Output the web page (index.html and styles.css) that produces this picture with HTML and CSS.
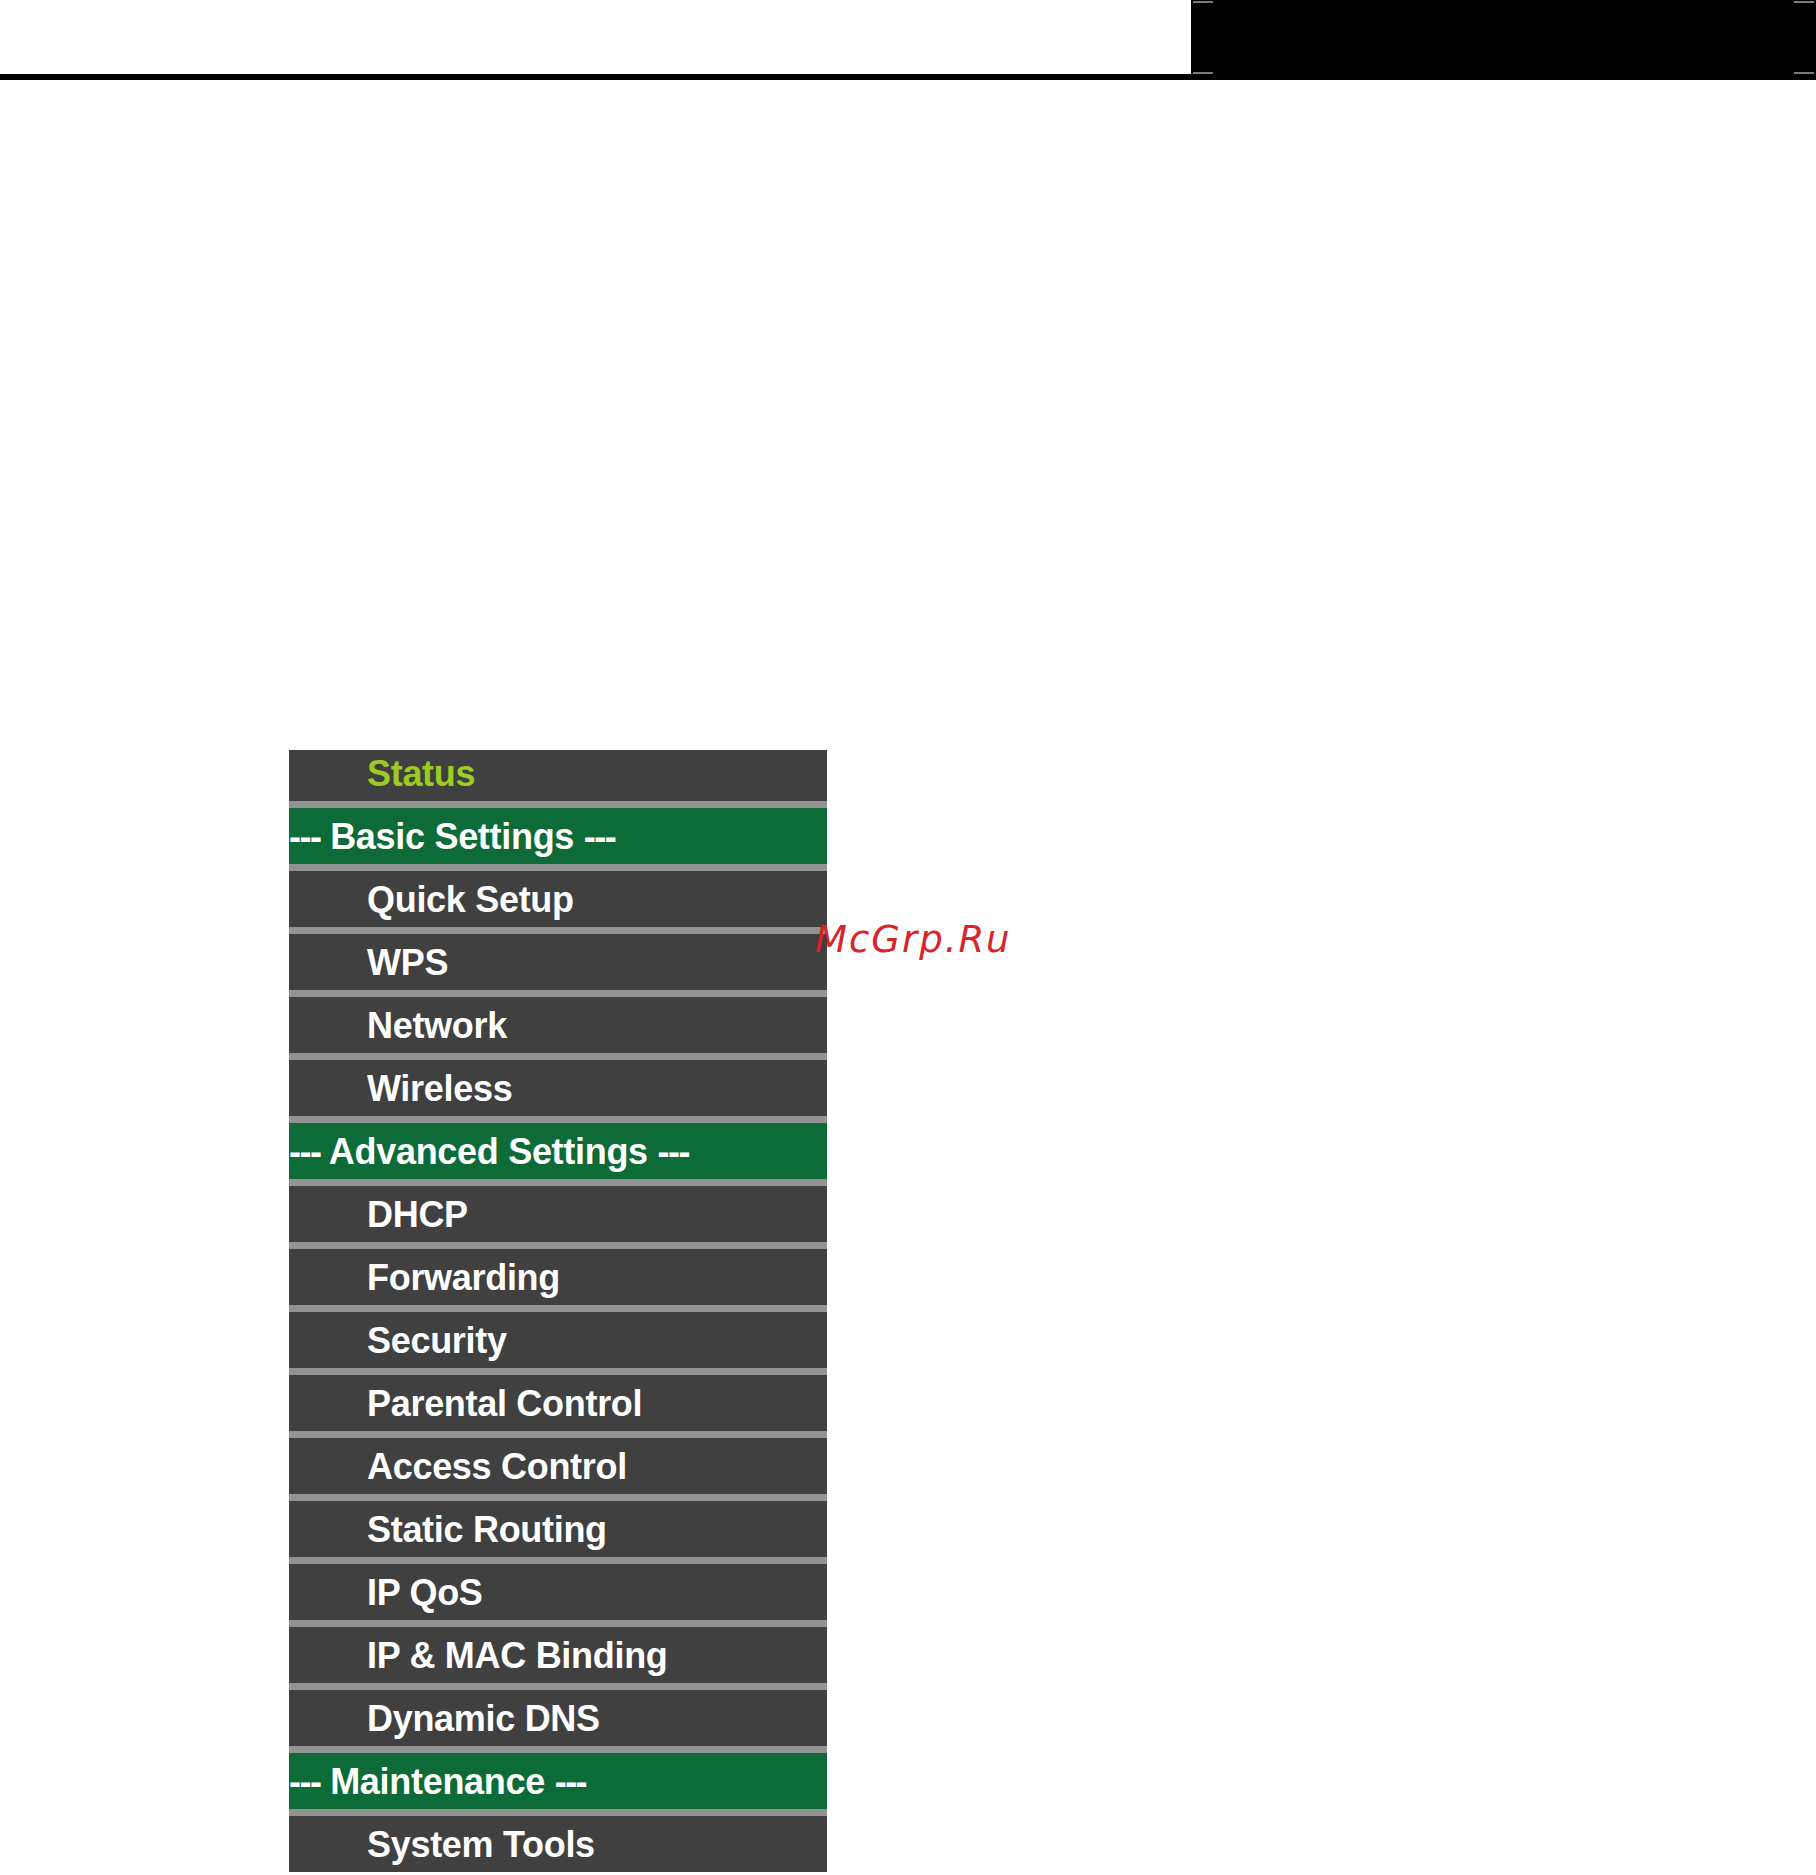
FILE: index.html
```html
<!DOCTYPE html>
<html>
<head>
<meta charset="utf-8">
<link rel="stylesheet" href="styles.css">
</head>
<body>
<div class="top">
  <div class="top-white"></div>
  <div class="top-box">
    <span class="tick tl"></span><span class="tick tr"></span>
    <span class="tick bl"></span><span class="tick br"></span>
  </div>
</div>
<div class="top-line"></div>
<div class="menu">
  <div class="row item status first">Status</div>
  <div class="row head"><span class="dash">---</span> Basic Settings <span class="dash">---</span></div>
  <div class="row item">Quick Setup</div>
  <div class="row item">WPS</div>
  <div class="row item">Network</div>
  <div class="row item">Wireless</div>
  <div class="row head"><span class="dash">---</span> Advanced Settings <span class="dash">---</span></div>
  <div class="row item">DHCP</div>
  <div class="row item">Forwarding</div>
  <div class="row item">Security</div>
  <div class="row item">Parental Control</div>
  <div class="row item">Access Control</div>
  <div class="row item">Static Routing</div>
  <div class="row item">IP QoS</div>
  <div class="row item">IP &amp; MAC Binding</div>
  <div class="row item">Dynamic DNS</div>
  <div class="row head"><span class="dash">---</span> Maintenance <span class="dash">---</span></div>
  <div class="row item">System Tools</div>
</div>
<div class="watermark">McGrp.Ru</div>
</body>
</html>
```
FILE: styles.css
```css
html, body {
  margin: 0;
  padding: 0;
  background: #ffffff;
  height: 1875px;
  overflow: hidden;
}
body {
  position: relative;
  font-family: "Liberation Sans", Arial, sans-serif;
}
.top {
  display: flex;
  height: 74px;
}
.top-white {
  flex: 1;
  background: #ffffff;
}
.top-box {
  width: 625px;
  background: #000000;
  position: relative;
}
.tick {
  position: absolute;
  width: 20px;
  height: 2px;
  background: #7a7a7a;
}
.tick.tl { left: 2px; top: 1px; }
.tick.tr { right: 2px; top: 1px; }
.tick.bl { left: 2px; top: 72px; }
.tick.br { right: 2px; top: 72px; }
.top-line {
  height: 6px;
  background: #000000;
}
.menu {
  margin-top: 670px;
  margin-left: 289px;
  width: 538px;
  overflow: hidden;
  display: flex;
  flex-direction: column;
}
.row {
  height: 56px;
  line-height: 57px;
  font-size: 36px;
  font-weight: bold;
  letter-spacing: -0.3px;
  color: #ffffff;
  white-space: nowrap;
  overflow: hidden;
  flex: none;
}
.row + .row {
  border-top: 7px solid #939393;
}
.row.first {
  margin-top: -5px;
}
.item {
  background: #404040;
  padding-left: 78px;
}
.status {
  color: #9ccb23;
}
.head {
  background: #0c6b36;
}
.dash {
  letter-spacing: -1.5px;
}
.watermark {
  position: absolute;
  left: 815px;
  top: 921px;
  font-family: "DejaVu Sans", sans-serif;
  font-style: oblique;
  font-size: 37px;
  line-height: 37px;
  letter-spacing: 2px;
  color: #d9232a;
}
```
